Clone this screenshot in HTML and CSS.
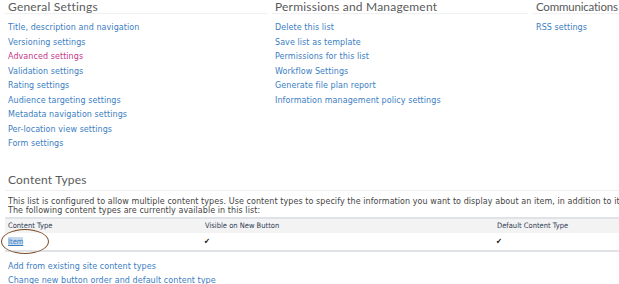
FILE: index.html
```html
<!DOCTYPE html>
<html>
<head>
<meta charset="utf-8">
<link rel="stylesheet" href="styles.css">
</head>
<body>
<div class="settings">
  <div class="col">
    <h3 class="head">General Settings</h3>
    <ul class="links">
      <li><a href="#">Title, description and navigation</a></li>
      <li><a href="#">Versioning settings</a></li>
      <li><a href="#" class="visited">Advanced settings</a></li>
      <li><a href="#">Validation settings</a></li>
      <li><a href="#">Rating settings</a></li>
      <li><a href="#">Audience targeting settings</a></li>
      <li><a href="#">Metadata navigation settings</a></li>
      <li><a href="#">Per-location view settings</a></li>
      <li><a href="#">Form settings</a></li>
    </ul>
  </div>
  <div class="col">
    <h3 class="head">Permissions and Management</h3>
    <ul class="links">
      <li><a href="#">Delete this list</a></li>
      <li><a href="#">Save list as template</a></li>
      <li><a href="#">Permissions for this list</a></li>
      <li><a href="#">Workflow Settings</a></li>
      <li><a href="#">Generate file plan report</a></li>
      <li><a href="#">Information management policy settings</a></li>
    </ul>
  </div>
  <div class="col">
    <h3 class="head tight">Communications</h3>
    <ul class="links">
      <li><a href="#">RSS settings</a></li>
    </ul>
  </div>
</div>

<div class="ctypes">
  <h3 class="head big">Content Types</h3>
  <p class="desc">This list is configured to allow multiple content types. Use content types to specify the information you want to display about an item, in addition to its policies, workflows, or other behavior.<br>The following content types are currently available in this list:</p>
  <table class="ctable">
    <thead>
      <tr><th class="c1">Content Type</th><th class="c2">Visible on New Button</th><th class="c3">Default Content Type</th></tr>
    </thead>
    <tbody>
      <tr>
        <td class="c1"><span class="circled"><a href="#" class="sel">Item</a></span></td>
        <td class="c2"><span class="check">&#10004;</span></td>
        <td class="c3"><span class="check">&#10004;</span></td>
      </tr>
    </tbody>
  </table>
  <ul class="links bottom">
    <li><a href="#">Add from existing site content types</a></li>
    <li><a href="#">Change new button order and default content type</a></li>
  </ul>
</div>
</body>
</html>
```

FILE: styles.css
```css
html, body {
  margin: 0;
  padding: 0;
  background: #ffffff;
  overflow: hidden;
}
body {
  width: 619px;
  height: 284px;
  font-family: "DejaVu Sans", Verdana, sans-serif;
  font-size: 8px;
  letter-spacing: 0.07px;
  color: #444444;
}
a {
  color: #3b7ec2;
  text-decoration: none;
}
a.visited {
  color: #c8388a;
}
.settings {
  display: grid;
  grid-template-columns: 262px 256px 1fr;
  column-gap: 5px;
  padding-left: 5px;
}
.head {
  margin: 0;
  font-family: "Lato", "Noto Sans", sans-serif;
  font-weight: normal;
  font-size: 12px;
  letter-spacing: 0.2px;
  line-height: 13px;
  color: #5a5a5a;
  padding-left: 3px;
  border-bottom: 1px solid #f0f0f0;
  height: 13px;
  white-space: nowrap;
}
.head.tight {
  font-size: 11.5px;
  letter-spacing: -0.2px;
}
.links {
  list-style: none;
  margin: 0;
  padding: 7px 0 0 3px;
}
.links li {
  height: 14.5px;
  line-height: 14.5px;
  white-space: nowrap;
}
.ctypes {
  margin-top: 20px;
  padding-left: 5px;
}
.ctypes .head {
  height: 18px;
  line-height: 16px;
}
.desc {
  margin: 6px 0 0 3px;
  line-height: 9px;
  height: 18px;
  white-space: nowrap;
  overflow: hidden;
  color: #444444;
}
.ctable {
  border-collapse: collapse;
  width: 614px;
  margin-top: 2px;
  font-family: "DejaVu Sans Condensed", "DejaVu Sans", sans-serif;
  font-size: 7.5px;
  letter-spacing: 0;
}
.ctable th {
  background: #f3f3f3;
  border-top: 2px solid #dfe3e8;
  font-weight: normal;
  text-align: left;
  color: #2f3c55;
  height: 14px;
  padding: 0 0 0 3px;
}
.ctable td {
  height: 17px;
  padding: 0 0 0 3px;
  border-bottom: 2px solid #dfe3e8;
}
.ctable .c1 { width: 194px; }
.ctable .c2 { width: 289px; }
.ctable td.c2, .ctable td.c3 { padding-left: 2px; }
.circled {
  position: relative;
  display: inline-block;
}
.circled::after {
  content: "";
  position: absolute;
  left: -7px;
  top: -8px;
  width: 46px;
  height: 23px;
  border: 1.5px solid #7d4a24;
  border-radius: 50%;
}
a.sel {
  background: #c5d9ef;
  color: #3b7ec2;
  text-decoration: underline;
}
.check {
  font-size: 8px;
  color: #111111;
}
.bottom {
  padding-top: 8px;
}
```
